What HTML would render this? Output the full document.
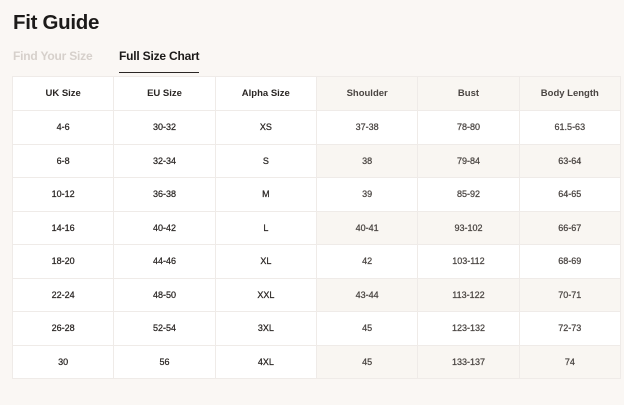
<!DOCTYPE html>
<html><head><style>
html,body{margin:0;padding:0;background:#faf7f4;width:624px;height:405px;overflow:hidden;font-family:"Liberation Sans",sans-serif;color:#1c1a19}
h1{position:absolute;left:13px;top:11px;margin:0;font-size:20.5px;font-weight:bold;letter-spacing:-0.3px}
.tab{position:absolute;top:49px;font-size:12px;font-weight:bold}
.t1{left:13px;color:#d6d0cb;letter-spacing:-0.2px}
.t2{left:119px;color:#1c1a19;padding-bottom:9px;border-bottom:1.5px solid #2a2624;letter-spacing:-0.2px}
table{position:absolute;left:12px;top:76px;width:609px;border-collapse:collapse;background:#fff;table-layout:fixed}
td,th{border:1px solid #efebe8;text-align:center;font-size:9px;height:32.5px;padding:0;color:#2a2624;font-weight:bold}
td{font-weight:normal;-webkit-text-stroke:0.25px #2a2624}
th{font-size:9.5px;height:33px}
th.b{background:#f9f6f2;color:#4a4542}
tr:nth-child(odd) td.b{background:#f9f6f2}
td.b{color:#4a4542;-webkit-text-stroke:0.25px #4a4542}
</style></head><body>
<h1>Fit Guide</h1>
<div class="tab t1">Find Your Size</div>
<div class="tab t2">Full Size Chart</div>
<table>
<tr><th>UK Size</th><th>EU Size</th><th>Alpha Size</th><th class="b">Shoulder</th><th class="b">Bust</th><th class="b">Body Length</th></tr>
<tr><td>4-6</td><td>30-32</td><td>XS</td><td class="b">37-38</td><td class="b">78-80</td><td class="b">61.5-63</td></tr>
<tr><td>6-8</td><td>32-34</td><td>S</td><td class="b">38</td><td class="b">79-84</td><td class="b">63-64</td></tr>
<tr><td>10-12</td><td>36-38</td><td>M</td><td class="b">39</td><td class="b">85-92</td><td class="b">64-65</td></tr>
<tr><td>14-16</td><td>40-42</td><td>L</td><td class="b">40-41</td><td class="b">93-102</td><td class="b">66-67</td></tr>
<tr><td>18-20</td><td>44-46</td><td>XL</td><td class="b">42</td><td class="b">103-112</td><td class="b">68-69</td></tr>
<tr><td>22-24</td><td>48-50</td><td>XXL</td><td class="b">43-44</td><td class="b">113-122</td><td class="b">70-71</td></tr>
<tr><td>26-28</td><td>52-54</td><td>3XL</td><td class="b">45</td><td class="b">123-132</td><td class="b">72-73</td></tr>
<tr><td>30</td><td>56</td><td>4XL</td><td class="b">45</td><td class="b">133-137</td><td class="b">74</td></tr>
</table>
</body></html>
